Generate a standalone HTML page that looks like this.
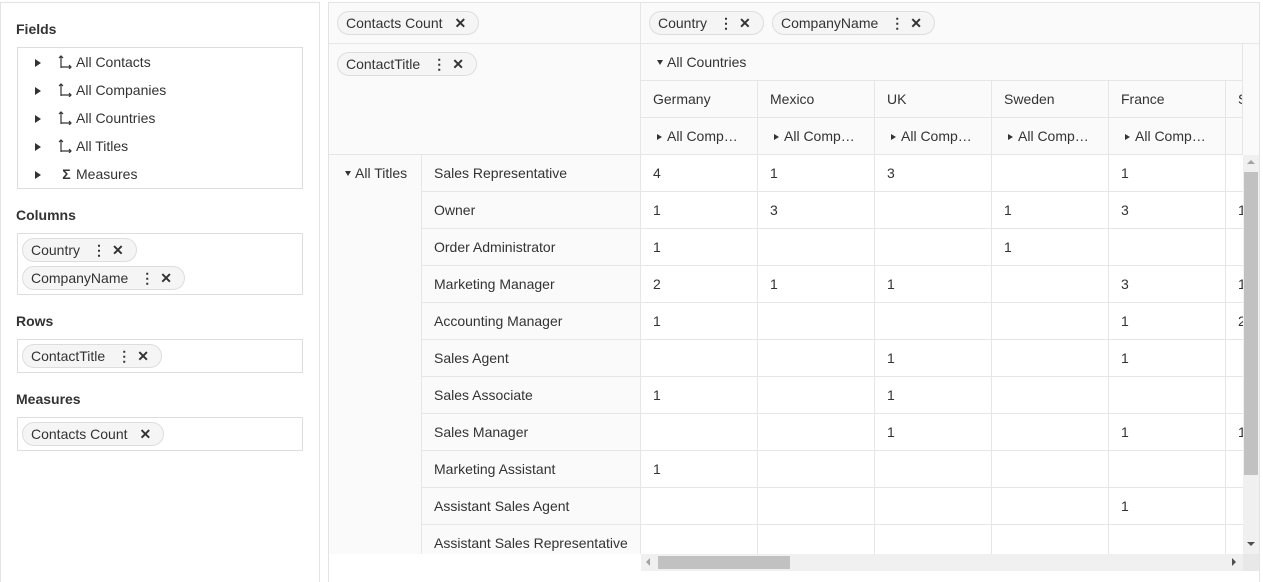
<!DOCTYPE html>
<html><head><meta charset="utf-8"><style>
*{box-sizing:border-box;margin:0;padding:0}
body{width:1263px;height:571px;overflow:hidden;background:#fff;font-family:"Liberation Sans",sans-serif;font-size:14px;color:#333;position:relative}
.a{position:absolute}
.lp{left:0;top:2px;width:320px;height:580px;border:1px solid #e3e3e3;border-bottom:none}
.h{font-weight:bold;font-size:14px;color:#333;position:absolute;left:16px}
.box{position:absolute;left:17px;width:286px;border:1px solid #ddd}
.chip{position:absolute;height:24px;border:1px solid #ddd;border-radius:12px;background:#f5f5f5;padding:0 12px 0 8px;line-height:22px;white-space:nowrap;color:#333}
.chip .d{display:inline-block;margin-left:12px;font-weight:bold;width:6px;text-align:center}
.chip .x{display:inline-block;margin-left:14px;font-weight:bold;font-size:14px}
.chip .x.n{margin-left:12px}
.tr{position:absolute;left:35px;color:#333;height:28px;line-height:28px}
.tr .t{display:inline-block;width:0;height:0;border-left:6px solid #333;border-top:4px solid transparent;border-bottom:4px solid transparent;margin-right:16px;vertical-align:0}
.hd{background:#fafafa}
.c{position:absolute;height:37px;line-height:36px;padding-left:12px;border-right:1px solid #e6e6e6;border-bottom:1px solid #e6e6e6;white-space:nowrap;overflow:hidden}
.dn{display:inline-block;border-top:5px solid #333;border-left:3.5px solid transparent;border-right:3.5px solid transparent;margin-right:4px;vertical-align:2px}
.rt{display:inline-block;border-left:5px solid #333;border-top:3.5px solid transparent;border-bottom:3.5px solid transparent;margin-right:5px;vertical-align:1px}
</style></head><body>
<div class="a lp"></div>
<div class="h" style="top:21px">Fields</div>
<div class="box" style="top:47px;height:142px"></div>
<div class="tr" style="top:48px;"><span class="t"></span><svg width="19" height="14" style="vertical-align:-2px"><path d="M4 1v12M2 3l2-2 2 2M4 12h10M12 10l2 2-2 2" stroke="#333" fill="none" stroke-width="1.2"/></svg>All Contacts</div>
<div class="tr" style="top:76px;"><span class="t"></span><svg width="19" height="14" style="vertical-align:-2px"><path d="M4 1v12M2 3l2-2 2 2M4 12h10M12 10l2 2-2 2" stroke="#333" fill="none" stroke-width="1.2"/></svg>All Companies</div>
<div class="tr" style="top:104px;"><span class="t"></span><svg width="19" height="14" style="vertical-align:-2px"><path d="M4 1v12M2 3l2-2 2 2M4 12h10M12 10l2 2-2 2" stroke="#333" fill="none" stroke-width="1.2"/></svg>All Countries</div>
<div class="tr" style="top:132px;"><span class="t"></span><svg width="19" height="14" style="vertical-align:-2px"><path d="M4 1v12M2 3l2-2 2 2M4 12h10M12 10l2 2-2 2" stroke="#333" fill="none" stroke-width="1.2"/></svg>All Titles</div>
<div class="tr" style="top:160px;"><span class="t"></span><span style="display:inline-block;width:19px;font-weight:bold;text-align:center">Σ</span>Measures</div>

<div class="h" style="top:207px">Columns</div>
<div class="box" style="top:233px;height:62px"></div>
<div class="chip" style="left:22px;top:238px">Country<span class="d">⋮</span><span class="x">✕</span></div>
<div class="chip" style="left:22px;top:266px">CompanyName<span class="d">⋮</span><span class="x">✕</span></div>
<div class="h" style="top:313px">Rows</div>
<div class="box" style="top:339px;height:34px"></div>
<div class="chip" style="left:22px;top:344px">ContactTitle<span class="d">⋮</span><span class="x">✕</span></div>
<div class="h" style="top:391px">Measures</div>
<div class="box" style="top:417px;height:34px"></div>
<div class="chip" style="left:22px;top:422px">Contacts Count<span class="x n">✕</span></div>

<div class="a" style="left:328px;top:2px;width:932px;height:580px;border:1px solid #e3e3e3;border-bottom:none"></div>
<div class="a hd" style="left:329px;top:3px;width:930px;height:41px;border-bottom:1px solid #e6e6e6"></div>
<div class="a" style="left:640px;top:3px;width:1px;height:152px;background:#e6e6e6"></div>
<div class="a hd" style="left:329px;top:44px;width:311px;height:111px;border-bottom:1px solid #e6e6e6"></div>
<div class="a hd" style="left:641px;top:44px;width:618px;height:111px;"></div>
<div class="chip" style="left:337px;top:11px">Contacts Count<span class="x n">✕</span></div>
<div class="chip" style="left:649px;top:11px">Country<span class="d">⋮</span><span class="x">✕</span></div>
<div class="chip" style="left:772px;top:11px">CompanyName<span class="d">⋮</span><span class="x">✕</span></div>
<div class="chip" style="left:337px;top:52px">ContactTitle<span class="d">⋮</span><span class="x">✕</span></div>

<div class="a" style="left:641px;top:44px;width:602px;height:111px;overflow:hidden">
<div class="c hd" style="left:0;top:0;width:602px;border-right:1px solid #e6e6e6;padding-left:16px"><span class="dn"></span>All Countries</div>
<div class="c hd" style="left:0;top:37px;width:117px">Germany</div>
<div class="c hd" style="left:117px;top:37px;width:117px">Mexico</div>
<div class="c hd" style="left:234px;top:37px;width:117px">UK</div>
<div class="c hd" style="left:351px;top:37px;width:117px">Sweden</div>
<div class="c hd" style="left:468px;top:37px;width:117px">France</div>
<div class="c hd" style="left:585px;top:37px;width:117px">Spain</div>
<div class="c hd" style="left:0;top:74px;width:117px;padding-left:16px"><span class="rt"></span>All Comp…</div>
<div class="c hd" style="left:117px;top:74px;width:117px;padding-left:16px"><span class="rt"></span>All Comp…</div>
<div class="c hd" style="left:234px;top:74px;width:117px;padding-left:16px"><span class="rt"></span>All Comp…</div>
<div class="c hd" style="left:351px;top:74px;width:117px;padding-left:16px"><span class="rt"></span>All Comp…</div>
<div class="c hd" style="left:468px;top:74px;width:117px;padding-left:16px"><span class="rt"></span>All Comp…</div>
<div class="c hd" style="left:585px;top:74px;width:117px"></div>
</div>
<div class="a" style="left:1242px;top:44px;width:1px;height:111px;background:#e6e6e6"></div>
<div class="a" style="left:641px;top:154px;width:602px;height:1px;background:#e6e6e6"></div>

<div class="a" style="left:329px;top:155px;width:312px;height:399px;overflow:hidden">
<div class="c hd" style="left:0;top:0;width:93px;height:420px;padding-left:16px"><span class="dn"></span>All Titles</div>
<div class="c hd" style="left:93px;top:0;width:219px">Sales Representative</div>
<div class="c hd" style="left:93px;top:37px;width:219px">Owner</div>
<div class="c hd" style="left:93px;top:74px;width:219px">Order Administrator</div>
<div class="c hd" style="left:93px;top:111px;width:219px">Marketing Manager</div>
<div class="c hd" style="left:93px;top:148px;width:219px">Accounting Manager</div>
<div class="c hd" style="left:93px;top:185px;width:219px">Sales Agent</div>
<div class="c hd" style="left:93px;top:222px;width:219px">Sales Associate</div>
<div class="c hd" style="left:93px;top:259px;width:219px">Sales Manager</div>
<div class="c hd" style="left:93px;top:296px;width:219px">Marketing Assistant</div>
<div class="c hd" style="left:93px;top:333px;width:219px">Assistant Sales Agent</div>
<div class="c hd" style="left:93px;top:370px;width:219px">Assistant Sales Representative</div>
</div>

<div class="a" style="left:641px;top:155px;width:602px;height:399px;overflow:hidden">
<div style="position:absolute;left:0;top:0;width:720px;height:420px;
background-image:linear-gradient(to right,transparent 116px,#e6e6e6 116px,#e6e6e6 117px,transparent 117px),linear-gradient(to bottom,transparent 36px,#e6e6e6 36px,#e6e6e6 37px,transparent 37px);background-size:117px 37px"></div>
<div style="position:absolute;left:0;top:0;line-height:36px">
<span class="a" style="left:12px;top:0">4</span><span class="a" style="left:129px;top:0">1</span><span class="a" style="left:246px;top:0">3</span><span class="a" style="left:480px;top:0">1</span>
<span class="a" style="left:12px;top:37px">1</span><span class="a" style="left:129px;top:37px">3</span><span class="a" style="left:363px;top:37px">1</span><span class="a" style="left:480px;top:37px">3</span><span class="a" style="left:597px;top:37px">1</span>
<span class="a" style="left:12px;top:74px">1</span><span class="a" style="left:363px;top:74px">1</span>
<span class="a" style="left:12px;top:111px">2</span><span class="a" style="left:129px;top:111px">1</span><span class="a" style="left:246px;top:111px">1</span><span class="a" style="left:480px;top:111px">3</span><span class="a" style="left:597px;top:111px">1</span>
<span class="a" style="left:12px;top:148px">1</span><span class="a" style="left:480px;top:148px">1</span><span class="a" style="left:597px;top:148px">2</span>
<span class="a" style="left:246px;top:185px">1</span><span class="a" style="left:480px;top:185px">1</span>
<span class="a" style="left:12px;top:222px">1</span><span class="a" style="left:246px;top:222px">1</span>
<span class="a" style="left:246px;top:259px">1</span><span class="a" style="left:480px;top:259px">1</span><span class="a" style="left:597px;top:259px">1</span>
<span class="a" style="left:12px;top:296px">1</span>
<span class="a" style="left:480px;top:333px">1</span>
</div>
</div>

<div class="a" style="left:1243px;top:155px;width:16px;height:399px;background:#f0f0f0"></div>
<div class="a" style="left:1244px;top:172px;width:14px;height:303px;background:#c1c1c1"></div>
<div class="a" style="left:1247px;top:160px;border-bottom:4px solid #a3a3a3;border-left:4px solid transparent;border-right:4px solid transparent"></div>
<div class="a" style="left:1247px;top:542px;border-top:4px solid #505050;border-left:4px solid transparent;border-right:4px solid transparent"></div>
<div class="a" style="left:641px;top:554px;width:618px;height:17px;background:#f0f0f0"></div>
<div class="a" style="left:658px;top:556px;width:132px;height:13px;background:#c1c1c1"></div>
<div class="a" style="left:646px;top:558px;border-right:4px solid #a3a3a3;border-top:4px solid transparent;border-bottom:4px solid transparent"></div>
<div class="a" style="left:1232px;top:558px;border-left:4px solid #505050;border-top:4px solid transparent;border-bottom:4px solid transparent"></div>
<div class="a" style="left:1243px;top:554px;width:16px;height:17px;background:#e8e8e8"></div>
</body></html>
